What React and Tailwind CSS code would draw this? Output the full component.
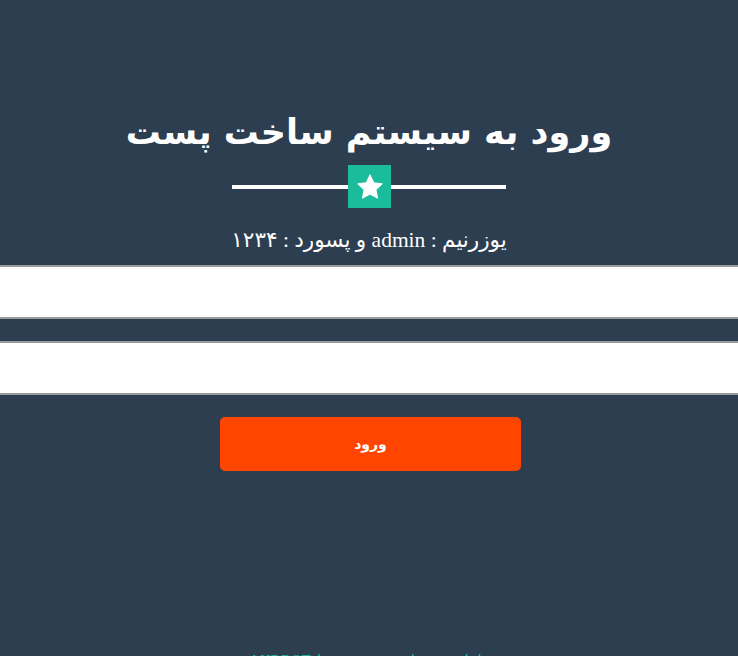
import React from 'react';

const Star = () => (
    <svg viewBox="0 0 24 24" className="w-[28px] h-[28px]" fill="white">
        <path d="M12 1.8l3.1 6.6 7.2.9-5.3 5 1.4 7.1L12 17.9l-6.4 3.5 1.4-7.1-5.3-5 7.2-.9z" strokeLinejoin="round" stroke="white" strokeWidth="1" />
    </svg>
);

export default function App() {
    return (
        <div dir="rtl" className="min-h-screen h-[656px] overflow-hidden bg-[#2c3e50] flex flex-col items-center" style={{ fontFamily: '"Liberation Serif", "DejaVu Sans", serif' }}>
            <h1 className="mt-[108px] text-[35px] leading-[48px] font-bold text-white" style={{ fontFamily: '"DejaVu Sans", sans-serif' }}>
                ورود به سیستم ساخت پست
            </h1>
            <div className="mt-[9px] flex items-center" dir="ltr">
                <div className="w-[116px] h-[4px] bg-white" />
                <div className="w-[43px] h-[43px] bg-[#1abc9c] flex items-center justify-center">
                    <Star />
                </div>
                <div className="w-[115px] h-[4px] bg-white" />
            </div>
            <p className="mt-[18px] text-[21.5px] leading-[28px] text-white">
                یوزرنیم : admin و پسورد : ۱۲۳۴
            </p>
            <form className="w-full mt-[11px] flex flex-col items-center" onSubmit={e => e.preventDefault()}>
                <input type="text" className="w-full h-[54px] bg-white border-y-2 border-[#9a9a9a] outline-none px-3" />
                <input type="password" className="w-full h-[54px] mt-[22px] bg-white border-y-2 border-[#9a9a9a] outline-none px-3" />
                <button type="submit" className="mt-[22px] ml-[3px] w-[301px] h-[54px] rounded-[5px] bg-[#ff4500] text-white text-[14px] font-bold" style={{ fontFamily: '"DejaVu Sans", sans-serif' }}>
                    ورود
                </button>
            </form>
            <div className="mt-auto h-[6px] overflow-visible">
                <p className="text-[15px] leading-[20px] text-[#1abc9c] whitespace-nowrap">
                    طراحی و ساخته شده توسط AHRBOT
                </p>
            </div>
        </div>
    );
}
